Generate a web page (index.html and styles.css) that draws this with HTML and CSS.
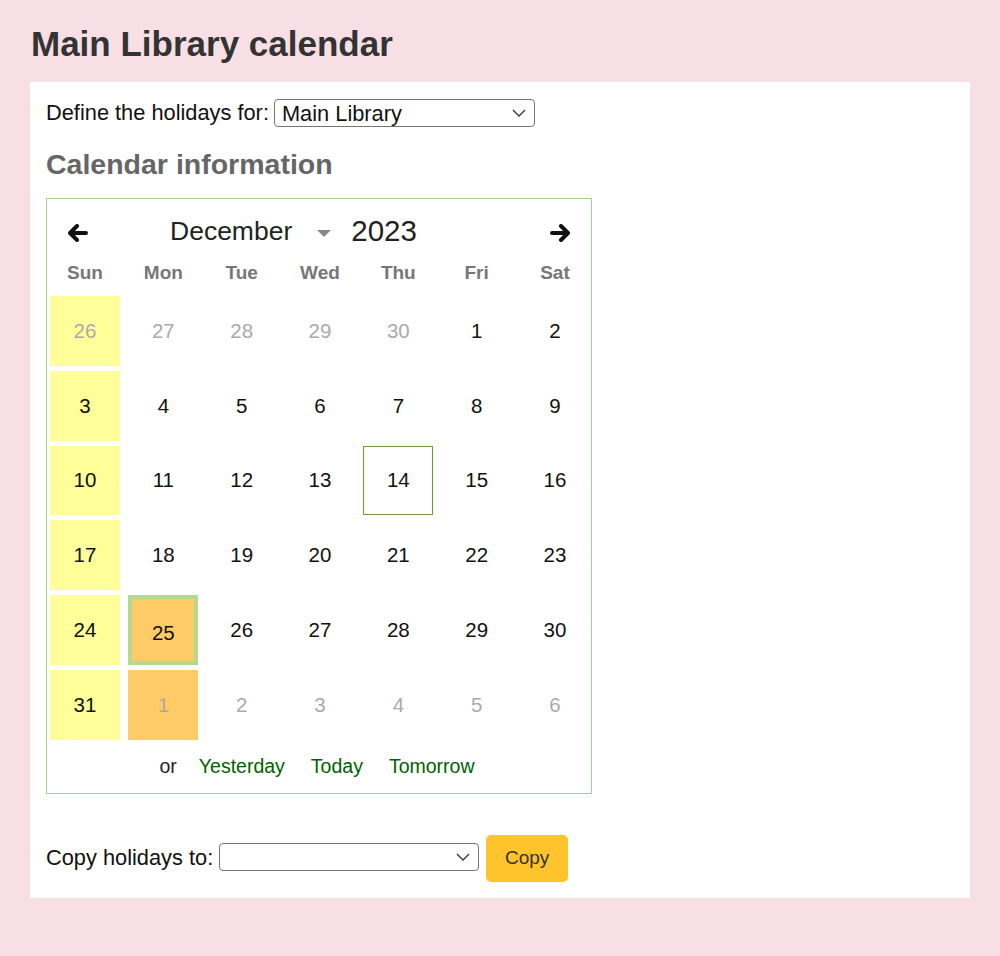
FILE: index.html
```html
<!DOCTYPE html>
<html lang="en">
<head>
    <meta charset="UTF-8">
    <meta name="viewport" content="width=device-width, initial-scale=1.0">
    <title>Main Library calendar</title>
    <link rel="stylesheet" href="styles.css">
</head>
<body>

<h1 class="page-title">Main Library calendar</h1>

<div class="panel">

    <div class="branch-row">
        <label for="branch">Define the holidays for:</label>
        <div class="select-wrap branch-wrap">
            <select id="branch" class="pick">
                <option>Main Library</option>
            </select>
            <svg class="chevron" width="14" height="8" viewBox="0 0 14 8"><path d="M1 1 L7 7 L13 1" fill="none" stroke="#333" stroke-width="1.3"/></svg>
        </div>
    </div>

    <h3 class="section-title">Calendar information</h3>

    <div class="calendar">
        <div class="cal-header">
            <span class="nav-arrow">
                <svg width="20" height="18" viewBox="0 0 20 18"><path d="M9 2 L2 9 L9 16 M2.5 9 H18" fill="none" stroke="#111" stroke-width="4" stroke-linecap="round" stroke-linejoin="round"/></svg>
            </span>
            <div class="month-picker">
                <span class="cur-month">December</span>
                <span class="month-caret"></span>
                <span class="cur-year">2023</span>
            </div>
            <span class="nav-arrow next">
                <svg width="20" height="18" viewBox="0 0 20 18"><path d="M11 2 L18 9 L11 16 M17.5 9 H2" fill="none" stroke="#111" stroke-width="4" stroke-linecap="round" stroke-linejoin="round"/></svg>
            </span>
        </div>

        <div class="weekdays">
            <span>Sun</span><span>Mon</span><span>Tue</span><span>Wed</span><span>Thu</span><span>Fri</span><span>Sat</span>
        </div>

        <div class="days">
            <span class="day other holiday">26</span>
            <span class="day other">27</span>
            <span class="day other">28</span>
            <span class="day other">29</span>
            <span class="day other">30</span>
            <span class="day">1</span>
            <span class="day">2</span>

            <span class="day holiday">3</span>
            <span class="day">4</span>
            <span class="day">5</span>
            <span class="day">6</span>
            <span class="day">7</span>
            <span class="day">8</span>
            <span class="day">9</span>

            <span class="day holiday">10</span>
            <span class="day">11</span>
            <span class="day">12</span>
            <span class="day">13</span>
            <span class="day today">14</span>
            <span class="day">15</span>
            <span class="day">16</span>

            <span class="day holiday">17</span>
            <span class="day">18</span>
            <span class="day">19</span>
            <span class="day">20</span>
            <span class="day">21</span>
            <span class="day">22</span>
            <span class="day">23</span>

            <span class="day holiday">24</span>
            <span class="day exception selected">25</span>
            <span class="day">26</span>
            <span class="day">27</span>
            <span class="day">28</span>
            <span class="day">29</span>
            <span class="day">30</span>

            <span class="day holiday">31</span>
            <span class="day other exception">1</span>
            <span class="day other">2</span>
            <span class="day other">3</span>
            <span class="day other">4</span>
            <span class="day other">5</span>
            <span class="day other">6</span>
        </div>

        <div class="shortcuts">
            <span class="or">or</span>
            <a href="#">Yesterday</a>
            <a href="#">Today</a>
            <a href="#">Tomorrow</a>
        </div>
    </div>

    <div class="copy-row">
        <label for="copyTo">Copy holidays to:</label>
        <div class="select-wrap copy-wrap">
            <select id="copyTo" class="pick">
                <option></option>
            </select>
            <svg class="chevron" width="14" height="8" viewBox="0 0 14 8"><path d="M1 1 L7 7 L13 1" fill="none" stroke="#333" stroke-width="1.3"/></svg>
        </div>
        <button type="button" class="copy-btn">Copy</button>
    </div>

</div>

</body>
</html>
```

FILE: styles.css
```css
body {
    margin: 0;
    background-color: #f7dfe5;
    font-family: "Liberation Sans", Arial, sans-serif;
    font-size: 21.8px;
    color: #111;
}

.page-title {
    margin: 0;
    padding: 24px 0 0 31px;
    height: 82px;
    font-size: 35px;
    font-weight: bold;
    color: #333;
    box-sizing: border-box;
}

.panel {
    margin: 0 30px;
    background-color: #fff;
    padding: 17px 16px 16px;
    height: 816px;
    box-sizing: border-box;
}

.branch-row {
    display: flex;
    align-items: center;
    gap: 5px;
}

/* native look without the platform arrows */
.select-wrap {
    position: relative;
    display: flex;
}

.pick {
    appearance: none;
    -webkit-appearance: none;
    width: 100%;
    height: 100%;
    padding: 0 30px 0 7px;
    font-family: inherit;
    font-size: 21.8px;
    color: #111;
    border: 1px solid #767676;
    border-radius: 4px;
    background-color: #fff;
}

.chevron {
    position: absolute;
    right: 9px;
    top: 50%;
    margin-top: -4px;
    pointer-events: none;
}

.branch-wrap {
    width: 261px;
    height: 28px;
}

.section-title {
    margin: 19px 0 16px;
    font-size: 28.5px;
    font-weight: bold;
    color: #666;
    line-height: 36px;
}

.calendar {
    width: 546px;
    border: 1px solid #a6d28e;
    box-sizing: border-box;
    padding: 14px 1px 12px 3px;
}

.cal-header {
    display: flex;
    align-items: center;
    height: 40px;
}

.nav-arrow {
    display: flex;
    margin-left: 18px;
}

.nav-arrow.next {
    margin-left: auto;
    margin-right: 20px;
}

.month-picker {
    display: flex;
    align-items: center;
    margin-left: 82px;
    color: #222;
}

.cur-month {
    font-size: 26.5px;
    margin-top: -3px;
}

.month-caret {
    width: 0;
    height: 0;
    border-left: 7px solid transparent;
    border-right: 7px solid transparent;
    border-top: 7px solid #888;
    margin: 0 20px 0 25px;
}

.cur-year {
    font-size: 29.5px;
    margin-top: -5px;
}

.weekdays,
.days {
    display: grid;
    grid-template-columns: repeat(7, 1fr);
    column-gap: 8.3px;
    width: 540px;
}

.weekdays {
    margin-top: 7px;
    height: 26px;
    line-height: 26px;
    text-align: center;
    font-size: 19px;
    font-weight: bold;
    color: #777;
}

.days {
    margin-top: 10px;
    grid-auto-rows: 69.8px;
    row-gap: 5px;
}

.day {
    display: flex;
    align-items: center;
    justify-content: center;
    font-size: 20.5px;
    color: #111;
    box-sizing: border-box;
}

.day.other {
    color: #aaa;
}

.day.holiday {
    background-color: #ffff99;
}

.day.exception {
    background-color: #ffcb66;
}

.day.selected {
    border: 4px solid #b3da8d;
    padding-top: 6px;
}

.day.today {
    border: 1px solid #6b9b2e;
}

.shortcuts {
    display: flex;
    justify-content: center;
    align-items: center;
    gap: 26px;
    height: 28px;
    margin-top: 13px;
    padding-right: 6px;
    font-size: 19.5px;
}

.shortcuts .or {
    color: #222;
    margin-right: -4px;
}

.shortcuts a {
    color: #006100;
    text-decoration: none;
}

.copy-row {
    display: flex;
    align-items: center;
    margin-top: 41px;
}

.copy-row label {
    margin-right: 6px;
}

.copy-wrap {
    width: 260px;
    height: 28px;
    margin-top: -3px;
}

.copy-btn {
    margin-left: 7px;
    width: 82px;
    height: 47px;
    background-color: #ffc32b;
    color: #333;
    font-family: inherit;
    font-size: 19px;
    border: none;
    border-radius: 5px;
    cursor: pointer;
}
```
